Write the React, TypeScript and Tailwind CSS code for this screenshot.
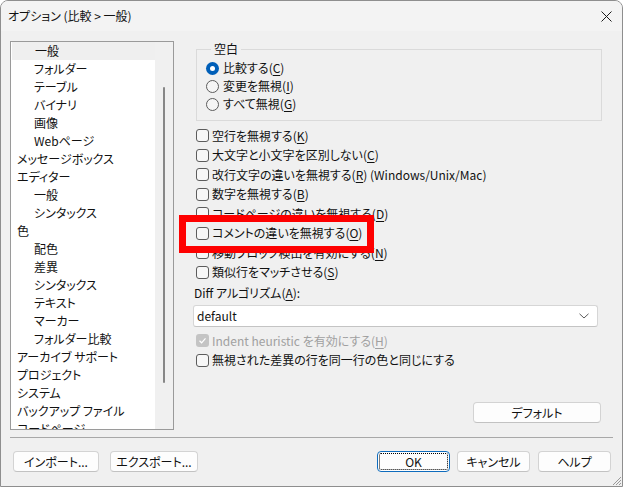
import React from "react";

type Item = { label: string; level: 0 | 1; selected?: boolean };

const treeItems: Item[] = [
  { label: "一般", level: 1, selected: true },
  { label: "フォルダー", level: 1 },
  { label: "テーブル", level: 1 },
  { label: "バイナリ", level: 1 },
  { label: "画像", level: 1 },
  { label: "Webページ", level: 1 },
  { label: "メッセージボックス", level: 0 },
  { label: "エディター", level: 0 },
  { label: "一般", level: 1 },
  { label: "シンタックス", level: 1 },
  { label: "色", level: 0 },
  { label: "配色", level: 1 },
  { label: "差異", level: 1 },
  { label: "シンタックス", level: 1 },
  { label: "テキスト", level: 1 },
  { label: "マーカー", level: 1 },
  { label: "フォルダー比較", level: 1 },
  { label: "アーカイブ サポート", level: 0 },
  { label: "プロジェクト", level: 0 },
  { label: "システム", level: 0 },
  { label: "バックアップ ファイル", level: 0 },
  { label: "コードページ", level: 0 },
];

const Key = ({ k }: { k: string }) => (
  <>
    (<span className="underline underline-offset-2">{k}</span>)
  </>
);

const Radio = ({ checked, children }: { checked?: boolean; children: React.ReactNode }) => (
  <div className="flex h-[18px] items-center gap-[4px]">
    {checked ? (
      <span className="flex h-[13px] w-[13px] items-center justify-center rounded-full bg-[#005fb8]">
        <span className="h-[5px] w-[5px] rounded-full bg-white" />
      </span>
    ) : (
      <span className="h-[13px] w-[13px] rounded-full border border-[#5c5c5c] bg-[#f5f5f5]" />
    )}
    <span>{children}</span>
  </div>
);

const Check = ({
  checked,
  disabled,
  children,
}: {
  checked?: boolean;
  disabled?: boolean;
  children: React.ReactNode;
}) => (
  <div className={`flex h-[19.5px] items-center gap-[3px] ${disabled ? "text-[#a0a0a0]" : ""}`}>
    {checked ? (
      <span
        className={`flex h-[13px] w-[13px] items-center justify-center rounded-[3px] ${
          disabled ? "bg-[#c4c4c4]" : "bg-[#005fb8]"
        }`}
      >
        <svg width="9" height="9" viewBox="0 0 9 9">
          <path d="M1.5 4.8 L3.6 6.8 L7.5 2.3" fill="none" stroke="white" strokeWidth="1.2" />
        </svg>
      </span>
    ) : (
      <span className="h-[13px] w-[13px] rounded-[3px] border border-[#5c5c5c] bg-[#f7f7f7]" />
    )}
    <span>{children}</span>
  </div>
);

const Btn = ({ children, className = "", primary }: { children: React.ReactNode; className?: string; primary?: boolean }) => (
  <button
    className={`relative flex h-[21px] items-center justify-center rounded-[4px] border bg-[#fdfdfd] text-[12px] ${
      primary ? "border-[#0f6cbd]" : "border-[#d3d3d3] border-b-[#c2c2c2]"
    } ${className}`}
  >
    {primary && <span className="absolute inset-[1px] rounded-[2px] border border-dotted border-black" />}
    {children}
  </button>
);

export default function App() {
  return (
    <div className="relative h-[487px] w-[623px] overflow-hidden rounded-t-[8px] border border-[#8e8e8e] bg-[#f0f0f0] font-['Noto_Sans_CJK_JP','Noto_Sans',sans-serif] text-[12px] leading-[16px] text-[#111] [font-feature-settings:'palt']">
      {/* title bar */}
      <div className="flex h-[30px] items-center justify-between bg-[#f3f3f3] pl-[7px] pr-[10px]">
        <span>オプション (比較 &gt; 一般)</span>
        <svg width="11" height="11" viewBox="0 0 11 11">
          <path d="M0.5 0.5 L10.5 10.5 M10.5 0.5 L0.5 10.5" stroke="#1b1b1b" strokeWidth="1" />
        </svg>
      </div>

      <div className="flex flex-col pl-[9px] pt-[10px]">
        <div className="flex">
          {/* tree */}
          <div className="flex h-[389px] w-[164px] border border-[#9a9a9a] bg-white">
            <div className="flex-1 overflow-hidden">
              {treeItems.map((it, i) => (
                <div
                  key={i}
                  className={`h-[18px] whitespace-nowrap leading-[18px] ${it.level === 0 ? "pl-[6px]" : "pl-[23px]"} ${
                    it.selected ? "ml-px bg-[#efefef]" : ""
                  }`}
                >
                  {it.label}
                </div>
              ))}
            </div>
            <div className="w-[18px] bg-[#f0f0f0] pt-[45px]">
              <div className="mx-auto h-[296px] w-[2px] rounded-full bg-[#878787]" />
            </div>
          </div>

          {/* right panel */}
          <div className="ml-[19px] flex h-[389px] w-[408px] flex-col">
            <fieldset className="ml-[3px] w-[406px] border border-[#dadada] pb-[7px] pl-[9px] pt-[2px]">
              <legend className="ml-[5px] px-[3px]">空白</legend>
              <Radio checked>
                比較する<Key k="C" />
              </Radio>
              <Radio>
                変更を無視<Key k="I" />
              </Radio>
              <Radio>
                すべて無視<Key k="G" />
              </Radio>
            </fieldset>

            <div className="ml-[3px] mt-[5px]">
              <Check>
                空行を無視する<Key k="K" />
              </Check>
              <Check>
                大文字と小文字を区別しない<Key k="C" />
              </Check>
              <Check>
                改行文字の違いを無視する<Key k="R" /> (Windows/Unix/Mac)
              </Check>
              <Check>
                数字を無視する<Key k="B" />
              </Check>
              <Check>
                コードページの違いを無視する<Key k="D" />
              </Check>
              <Check>
                コメントの違いを無視する<Key k="O" />
              </Check>
              <Check>
                移動ブロック検出を有効にする<Key k="N" />
              </Check>
              <Check>
                類似行をマッチさせる<Key k="S" />
              </Check>
            </div>

            <div className="ml-px mt-px flex h-[20px] items-center">
              Diff アルゴリズム<Key k="A" />:
            </div>
            <div className="mt-[2px] flex h-[22px] w-[405px] items-center justify-between rounded-[3px] border border-[#d6d6d6] border-b-[#c4c4c4] bg-white pl-[3px] pr-[8px]">
              <span>default</span>
              <svg width="10" height="6" viewBox="0 0 10 6">
                <path d="M0.5 0.8 L5 5 L9.5 0.8" fill="none" stroke="#5a5a5a" strokeWidth="1" />
              </svg>
            </div>

            <div className="ml-[3px] mt-[4px]">
              <Check checked disabled>
                Indent heuristic を有効にする<Key k="H" />
              </Check>
              <Check>無視された差異の行を同一行の色と同じにする</Check>
            </div>

            <Btn className="mb-[7px] mt-auto w-[128px] self-end">デフォルト</Btn>
          </div>
        </div>

        <div className="mt-[7px] h-px w-[603px] bg-[#a8a8a8]" />

        <div className="mt-[13px] flex w-[601px]">
          <Btn className="ml-[3px] w-[86px]">インポート...</Btn>
          <Btn className="ml-[11px] w-[88px]">エクスポート...</Btn>
          <Btn primary className="ml-auto w-[73px]">
            OK
          </Btn>
          <Btn className="ml-[7px] w-[73px]">キャンセル</Btn>
          <Btn className="ml-[8px] w-[73px]">ヘルプ</Btn>
        </div>
      </div>

      {/* annotation highlight */}
      <div className="pointer-events-none absolute left-[178px] top-[214px] h-[38px] w-[195px] border-[7px] border-[#fe0000]" />

      {/* resize grip */}
      <svg className="absolute bottom-0 right-0" width="11" height="11" viewBox="0 0 11 11">
        <path d="M10 2 L2 10 M10 5 L5 10 M10 8 L8 10" stroke="#9a9a9a" strokeWidth="1" />
      </svg>
    </div>
  );
}
